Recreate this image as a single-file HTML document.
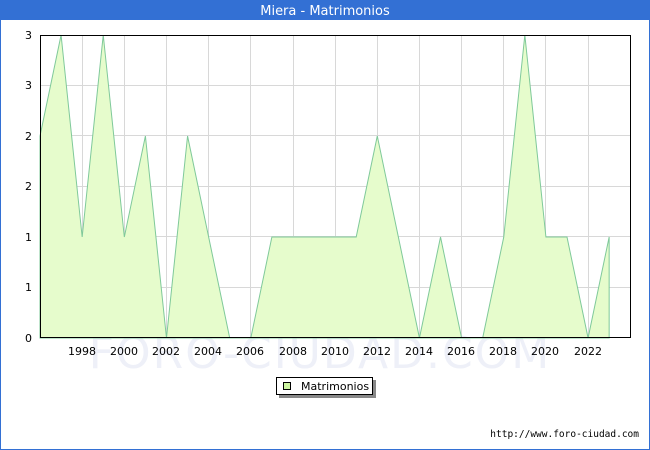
<!DOCTYPE html>
<html><head><meta charset="utf-8"><style>
html,body{margin:0;padding:0;background:#fff}
body{width:650px;height:450px;position:relative;overflow:hidden;font-family:"DejaVu Sans","Liberation Sans",sans-serif}
</style></head><body>
<svg width="650" height="450" xmlns="http://www.w3.org/2000/svg" style="position:absolute;left:0;top:0">
<rect x="0.5" y="0.5" width="649" height="449" fill="#fff" stroke="#3370d4"/>
<rect x="0" y="0" width="650" height="20" fill="#3370d4"/>
<text x="325" y="15" text-anchor="middle" fill="#fff" font-size="13" font-family="DejaVu Sans,sans-serif">Miera - Matrimonios</text>
<text x="320" y="368" text-anchor="middle" fill="#eef0f8" font-size="44" font-family="DejaVu Sans,sans-serif" letter-spacing="2">FORO-CIUDAD.COM</text>
<g stroke="#d8d8d8" stroke-width="1">
<line x1="40" y1="85.5" x2="631" y2="85.5"/><line x1="40" y1="135.5" x2="631" y2="135.5"/><line x1="40" y1="186.5" x2="631" y2="186.5"/><line x1="40" y1="236.5" x2="631" y2="236.5"/><line x1="40" y1="287.5" x2="631" y2="287.5"/>
<line x1="82.5" y1="35" x2="82.5" y2="338"/><line x1="124.5" y1="35" x2="124.5" y2="338"/><line x1="166.5" y1="35" x2="166.5" y2="338"/><line x1="208.5" y1="35" x2="208.5" y2="338"/><line x1="250.5" y1="35" x2="250.5" y2="338"/><line x1="293.5" y1="35" x2="293.5" y2="338"/><line x1="335.5" y1="35" x2="335.5" y2="338"/><line x1="377.5" y1="35" x2="377.5" y2="338"/><line x1="419.5" y1="35" x2="419.5" y2="338"/><line x1="461.5" y1="35" x2="461.5" y2="338"/><line x1="503.5" y1="35" x2="503.5" y2="338"/><line x1="545.5" y1="35" x2="545.5" y2="338"/><line x1="588.5" y1="35" x2="588.5" y2="338"/>
</g>
<g transform="translate(40,338) scale(21.08,-101)">
<polygon fill="#e6fccc" stroke="#7fc99a" stroke-width="1" vector-effect="non-scaling-stroke" points="0,0 0,2 1,3 2,1 3,3 4,1 5,2 6,0 7,2 8,1 9,0 10,0 11,1 12,1 13,1 14,1 15,1 16,2 17,1 18,0 19,1 20,0 21,0 22,1 23,3 24,1 25,1 26,0 27,1 27,0"/>
</g>
<rect x="40.5" y="35.5" width="590" height="302" fill="none" stroke="#000"/>
<g font-size="11" fill="#000" text-anchor="end">
<text x="32" y="39">3</text><text x="32" y="89">3</text><text x="32" y="140">2</text><text x="32" y="190">2</text><text x="32" y="241">1</text><text x="32" y="291">1</text><text x="32" y="342">0</text>
</g>
<g font-size="11" fill="#000" text-anchor="middle">
<text x="82" y="355">1998</text><text x="124" y="355">2000</text><text x="166" y="355">2002</text><text x="208" y="355">2004</text><text x="250" y="355">2006</text><text x="293" y="355">2008</text><text x="335" y="355">2010</text><text x="377" y="355">2012</text><text x="419" y="355">2014</text><text x="461" y="355">2016</text><text x="503" y="355">2018</text><text x="545" y="355">2020</text><text x="588" y="355">2022</text>
</g>
<rect x="279" y="380" width="97" height="18" fill="#888"/>
<rect x="276.5" y="377.5" width="96" height="17" fill="#fff" stroke="#000"/>
<rect x="283.5" y="382.5" width="7" height="7" fill="#ccf5a0" stroke="#000"/>
<text x="301" y="390" font-size="11">Matrimonios</text>
<text x="639" y="437" font-size="9.5" text-anchor="end" font-family="DejaVu Sans Mono,monospace">http://www.foro-ciudad.com</text>
</svg>
</body></html>
